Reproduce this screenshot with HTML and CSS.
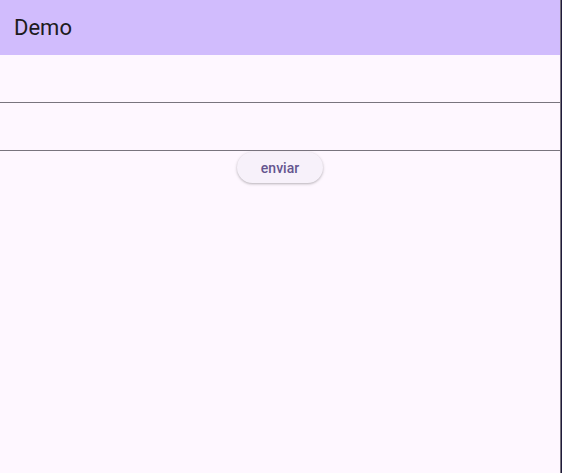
FILE: index.html
```html
<!DOCTYPE html>
<html>
<head>
<meta charset="utf-8">
<link rel="stylesheet" href="styles.css">
</head>
<body>
<div class="frame">
  <div class="app">
    <header class="appbar">Demo</header>
    <div class="field"><input class="input" type="text"></div>
    <div class="field"><input class="input" type="text"></div>
    <div class="actions"><button class="btn">enviar</button></div>
  </div>
  <div class="edge"></div>
</div>
</body>
</html>
```
FILE: styles.css
```css
html, body {
  margin: 0;
  padding: 0;
  background: #fef7ff;
}
.frame {
  display: flex;
  height: 473px;
  width: 562px;
}
.app {
  width: 560px;
  display: flex;
  flex-direction: column;
  background: #fef7ff;
  border-right: 1px solid #79747e;
  font-family: Roboto, "Noto Sans", sans-serif;
}
.edge {
  width: 1px;
  background: #1f1a3b;
}
.appbar {
  height: 55px;
  background: #d1bcfd;
  color: #1d1b20;
  font-size: 22px;
  line-height: 55px;
  padding-left: 14px;
  box-sizing: border-box;
}
.field {
  height: 48px;
  box-sizing: border-box;
  border-bottom: 1px solid #79747e;
}
.input {
  width: 100%;
  height: 100%;
  border: 0;
  outline: none;
  background: transparent;
  font: 16px Roboto, sans-serif;
  padding: 0 12px;
  box-sizing: border-box;
}
.actions {
  display: flex;
  justify-content: center;
  padding-top: 1px;
}
.btn {
  height: 31px;
  width: 86px;
  border: 0;
  border-radius: 16px;
  background: #f7f1fa;
  color: #65558f;
  font-family: Roboto, sans-serif;
  font-weight: 500;
  font-size: 14px;
  padding: 0 0 0 0;
  box-shadow: 0 1px 2px rgba(0,0,0,0.18), 0 1px 3px 1px rgba(0,0,0,0.08);
}
```
